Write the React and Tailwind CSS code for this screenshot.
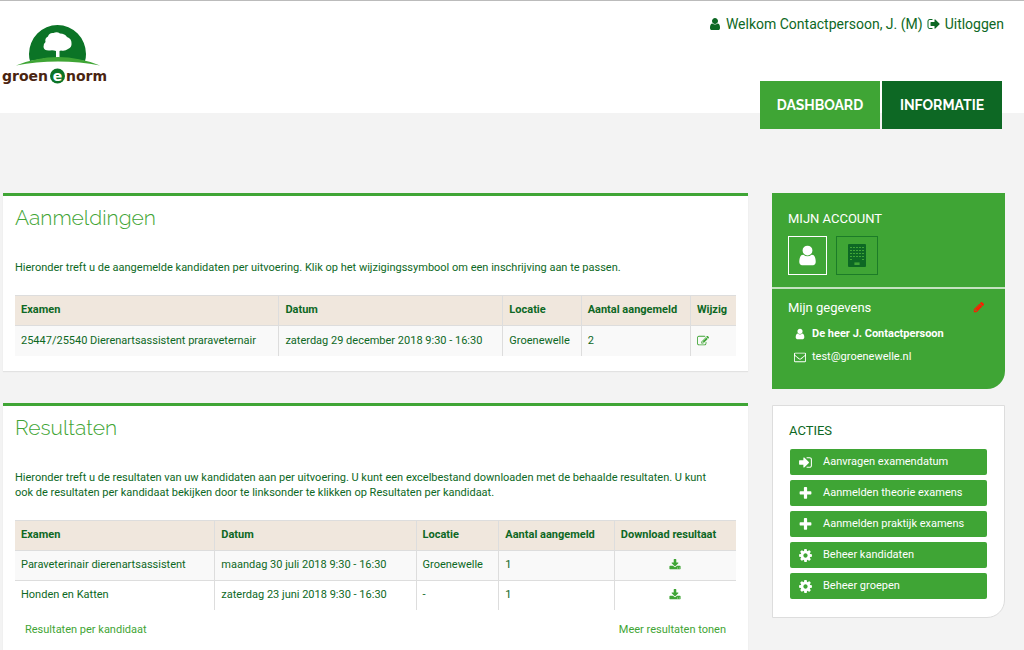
import React from 'react';

const PATHS = {
  user: 'M1536 1399q0 109-62.5 187t-150.5 78h-854q-88 0-150.5-78t-62.5-187q0-85 8.5-160.5t31.5-152 58.5-131 94-89 134.5-34.5q131 128 313 128t313-128q76 0 134.5 34.5t94 89 58.5 131 31.5 152 8.5 160.5zm-256-887q0 159-112.5 271.5t-271.5 112.5-271.5-112.5-112.5-271.5 112.5-271.5 271.5-112.5 271.5 112.5 112.5 271.5z',
  signOut: 'M704 1440q0 4 1 20t.5 26.5-3 23.5-10 19.5-20.5 6.5h-320q-119 0-203.5-84.5t-84.5-203.5v-704q0-119 84.5-203.5t203.5-84.5h320q13 0 22.5 9.5t9.5 22.5q0 4 1 20t.5 26.5-3 23.5-10 19.5-20.5 6.5h-320q-66 0-113 47t-47 113v704q0 66 47 113t113 47h312l11.5 1 11.5 3 8 5.5 7 9 2 13.5zm928-544q0 26-19 45l-544 544q-19 19-45 19t-45-19-19-45v-288h-448q-26 0-45-19t-19-45v-384q0-26 19-45t45-19h448v-288q0-26 19-45t45-19 45 19l544 544q19 19 19 45z',
  signIn: 'M1312 896q0 26-19 45l-544 544q-19 19-45 19t-45-19-19-45v-288h-448q-26 0-45-19t-19-45v-384q0-26 19-45t45-19h448v-288q0-26 19-45t45-19 45 19l544 544q19 19 19 45zm352-352v704q0 119-84.5 203.5t-203.5 84.5h-320q-13 0-22.5-9.5t-9.5-22.5q0-4-1-20t-.5-26.5 3-23.5 10-19.5 20.5-6.5h320q66 0 113-47t47-113v-704q0-66-47-113t-113-47h-312l-11.5-1-11.5-3-8-5.5-7-9-2-13.5q0-4-1-20t-.5-26.5 3-23.5 10-19.5 20.5-6.5h320q119 0 203.5 84.5t84.5 203.5z',
  plus: 'M1600 736v192q0 40-28 68t-68 28h-416v416q0 40-28 68t-68 28h-192q-40 0-68-28t-28-68v-416h-416q-40 0-68-28t-28-68v-192q0-40 28-68t68-28h416v-416q0-40 28-68t68-28h192q40 0 68 28t28 68v416h416q40 0 68 28t28 68z',
  cog: 'M1152 896q0-106-75-181t-181-75-181 75-75 181 75 181 181 75 181-75 75-181zm512-109v222q0 12-8 23t-20 13l-185 28q-19 54-39 91 35 50 107 138 10 12 10 25t-9 23q-27 37-99 108t-94 71q-12 0-26-9l-138-108q-44 23-91 38-16 136-29 186-7 28-36 28h-222q-14 0-24.5-8.5t-11.5-21.5l-28-184q-49-16-90-37l-141 107q-10 9-25 9-14 0-25-11-126-114-165-168-7-10-7-23 0-12 8-23 15-21 51-66.5t54-70.5q-27-50-41-99l-183-27q-13-2-21-12.5t-8-23.5v-222q0-12 8-23t19-13l186-28q14-46 39-92-40-57-107-138-10-12-10-24 0-10 9-23 26-36 98.5-107.5t94.5-71.5q13 0 26 10l138 107q44-23 91-38 16-136 29-186 7-28 36-28h222q14 0 24.5 8.5t11.5 21.5l28 184q49 16 90 37l142-107q9-9 24-9 13 0 25 10 129 119 165 170 7 8 7 22 0 12-8 23-15 21-51 66.5t-54 70.5q26 50 41 98l183 28q13 2 21 12.5t8 23.5z',
  pencil: 'M491 1536l91-91-235-235-91 91v107h128v128h107zm523-928q0-22-22-22-10 0-17 7l-542 542q-7 7-7 17 0 22 22 22 10 0 17-7l542-542q7-7 7-17zm-54-192l416 416-832 832h-416v-416zm683 96q0 53-37 90l-166 166-416-416 166-165q36-38 90-38 53 0 91 38l235 234q37 39 37 91z',
  envelope: 'M1664 1504v-768q-32 36-69 66-268 206-426 338-51 43-83 67t-86.5 48.5-102.5 24.5h-2q-48 0-102.5-24.5t-86.5-48.5-83-67q-158-132-426-338-37-30-69-66v768q0 13 9.5 22.5t22.5 9.5h1472q13 0 22.5-9.5t9.5-22.5zm0-1051v-24.5l-.5-13-3-12.5-5.5-9-9-7.5-14-2.5h-1472q-13 0-22.5 9.5t-9.5 22.5q0 168 147 284 193 152 401 317 6 5 35 29.5t46 37.5 44.5 31.5 50.5 27.5 43 9h2q20 0 43-9t50.5-27.5 44.5-31.5 46-37.5 35-29.5q208-165 401-317 54-43 100.5-115.5t46.5-131.5zm128-37v1088q0 66-47 113t-113 47h-1472q-66 0-113-47t-47-113v-1088q0-66 47-113t113-47h1472q66 0 113 47t47 113z',
  edit: 'M888 1184l116-116-152-152-116 116v56h96v96h56zm440-720q-16-16-33 1l-350 350q-17 17-1 33t33-1l350-350q17-17 1-33zm80 594v190q0 119-84.5 203.5t-203.5 84.5h-832q-119 0-203.5-84.5t-84.5-203.5v-832q0-119 84.5-203.5t203.5-84.5h832q63 0 117 25 15 7 18 23 3 17-9 29l-49 49q-14 14-32 8-23-6-45-6h-832q-66 0-113 47t-47 113v832q0 66 47 113t113 47h832q66 0 113-47t47-113v-126q0-13 9-22l64-64q15-15 35-7t20 29zm-96-738l288 288-672 672h-288v-288zm444 132l-92 92-288-288 92-92q28-28 68-28t68 28l152 152q28 28 28 68t-28 68z',
  download: 'M1344 1344q0-26-19-45t-45-19-45 19-19 45 19 45 45 19 45-19 19-45zm256 0q0-26-19-45t-45-19-45 19-19 45 19 45 45 19 45-19 19-45zm128-224v320q0 40-28 68t-68 28h-1472q-40 0-68-28t-28-68v-320q0-40 28-68t68-28h465l135 136q58 56 136 56t136-56l136-136h464q40 0 68 28t28 68zm-325-569q17 41-14 70l-448 448q-18 19-45 19t-45-19l-448-448q-31-29-14-70 17-39 59-39h256v-448q0-26 19-45t45-19h256q26 0 45 19t19 45v448h256q42 0 59 39z',
};

function Icon({ name, className }) {
  return (
    <svg viewBox="0 0 1792 1792" fill="currentColor" aria-hidden="true" className={className}>
      <path d={PATHS[name]} />
    </svg>
  );
}

function BuildingIcon({ className }) {
  const windows = [];
  for (let row = 0; row < 5; row += 1) {
    for (let col = 0; col < 5; col += 1) {
      if (row === 4 && col > 0 && col < 4) continue;
      windows.push(<rect key={`${row}-${col}`} x={2 + col * 3} y={3 + row * 3} width="2" height="1" />);
    }
  }
  return (
    <svg viewBox="0 0 18 23" aria-hidden="true" className={className}>
      <rect width="18" height="23" rx="1" fill="#0d6824" />
      <g fill="#3fa535">
        {windows}
        <rect x="6.4" y="18.4" width="5.2" height="2.6" />
      </g>
    </svg>
  );
}

function Logo() {
  return (
    <svg viewBox="0 0 110 64" role="img" aria-label="groen e norm" className="h-16 w-[110px]">
      <path d="M30 40Q29 37 29 33A28.500 29 0 0 1 86 33Q86 37 85 40Q57 34 30 40z" fill="#0b7426" />
      <path
        d="M56 38V30Q53 29 50 29.500Q44 30 43.500 26Q43 23 45.500 21Q44.500 17 48 15.500Q49 11.500 53.500 12Q57 10.500 60 12.500Q65 12.500 67 16Q71.500 17.500 71.500 22Q72 26.500 68 28Q65 30.500 61 29.500L59.500 30V38z"
        fill="#fff"
      />
      <path d="M16 44.500q21-8.500 42-8.500t42 8.500q-20-4-42-4t-42 4z" fill="#3fa535" />
      <circle cx="57.500" cy="55" r="7.500" fill="#0b7426" />
      <g fontFamily="'DejaVu Sans', sans-serif" fontWeight="700" fontSize="14">
        <text x="2" y="60" fill="#4a2410">groen</text>
        <text x="57.500" y="60" textAnchor="middle" fill="#fff">e</text>
        <text x="66" y="60" fill="#4a2410">norm</text>
      </g>
    </svg>
  );
}

function Panel({ title, children, className = '' }) {
  return (
    <section className={`border-t-3 border-[#3fa535] bg-white px-3 shadow-[0_1px_1px_#e2e2e2] ${className}`}>
      <h2 className="pt-2 font-['Raleway','Lato',sans-serif] text-[21px] leading-7 font-light text-[#3fa535]">{title}</h2>
      {children}
    </section>
  );
}

function DataTable({ headers, rows }) {
  return (
    <table className="w-full border-collapse text-left">
      <thead>
        <tr className="h-[30px] border-t border-[#ddd] bg-[#f0e7dd]">
          {headers.map((h) => (
            <th key={h} scope="col" className="border-l border-[#ddd] px-1.5 font-bold whitespace-nowrap first:border-l-0">{h}</th>
          ))}
        </tr>
      </thead>
      <tbody>
        {rows.map((cells, i) => (
          <tr key={i} className="h-[30px] border-t border-[#ddd] odd:bg-[#f9f9f9]">
            {cells.map((c, j) => (
              <td key={j} className="border-l border-[#ddd] px-1.5 whitespace-nowrap first:border-l-0">{c}</td>
            ))}
          </tr>
        ))}
      </tbody>
    </table>
  );
}

const download = (
  <a href="#download" aria-label="Download resultaat" className="flex justify-center text-[#3fa535]">
    <Icon name="download" className="size-3" />
  </a>
);

const ACTIONS = [
  ['signIn', 'Aanvragen examendatum'],
  ['plus', 'Aanmelden theorie examens'],
  ['plus', 'Aanmelden praktijk examens'],
  ['cog', 'Beheer kandidaten'],
  ['cog', 'Beheer groepen'],
];

export default function App() {
  return (
    <div className="flex min-h-screen flex-col bg-[#f3f3f3] font-['Roboto',sans-serif] text-[11px] text-[#0d6824]">
      <header className="flex h-[113px] justify-between border-t border-[#bbb] bg-white pr-5">
        <a href="#home" className="mt-5 self-start"><Logo /></a>
        <div className="flex flex-col items-end justify-between">
          <div className="mt-[13px] flex items-center gap-1 text-sm leading-5">
            <Icon name="user" className="size-3.5" />
            <span>Welkom Contactpersoon, J. (M)</span>
            <a href="#logout" className="flex items-center gap-1">
              <Icon name="signOut" className="size-3.5" />
              Uitloggen
            </a>
          </div>
          <nav className="mr-0.5 -mb-4 flex shrink-0 gap-0.5 font-['Raleway','Lato',sans-serif] text-sm font-bold text-white">
            <a href="#dashboard" className="flex h-12 w-[120px] items-center justify-center bg-[#3fa535]">DASHBOARD</a>
            <a href="#informatie" className="flex h-12 w-[120px] items-center justify-center bg-[#0d6824]">INFORMATIE</a>
          </nav>
        </div>
      </header>

      <div className="flex flex-1 gap-6 pt-20 pr-[19px] pl-[3px]">
        <main className="flex min-w-0 flex-1 flex-col gap-8">
          <Panel title="Aanmeldingen" className="pb-[15px]">
            <p className="mt-7 mb-5 leading-[15px]">
              Hieronder treft u de aangemelde kandidaten per uitvoering. Klik op het wijzigingssymbool om een inschrijving aan te passen.
            </p>
            <DataTable
              headers={['Examen', 'Datum', 'Locatie', 'Aantal aangemeld', 'Wijzig']}
              rows={[[
                '25447/25540 Dierenartsassistent praraveternair',
                'zaterdag 29 december 2018 9:30 - 16:30',
                'Groenewelle',
                '2',
                <a href="#wijzig" aria-label="Wijzig" className="flex text-[#3fa535]"><Icon name="edit" className="size-3" /></a>,
              ]]}
            />
          </Panel>
          <Panel title="Resultaten" className="flex-1">
            <p className="mt-7 mb-5 pr-3 leading-[15px]">
              Hieronder treft u de resultaten van uw kandidaten aan per uitvoering. U kunt een excelbestand downloaden met de behaalde resultaten. U kunt ook de resultaten per kandidaat bekijken door te linksonder te klikken op Resultaten per kandidaat.
            </p>
            <DataTable
              headers={['Examen', 'Datum', 'Locatie', 'Aantal aangemeld', 'Download resultaat']}
              rows={[
                ['Paraveterinair dierenartsassistent', 'maandag 30 juli 2018 9:30 - 16:30', 'Groenewelle', '1', download],
                ['Honden en Katten', 'zaterdag 23 juni 2018 9:30 - 16:30', '-', '1', download],
              ]}
            />
            <div className="flex justify-between px-2.5 py-3 leading-4 text-[#3fa535]">
              <a href="#kandidaat">Resultaten per kandidaat</a>
              <a href="#meer">Meer resultaten tonen</a>
            </div>
          </Panel>
        </main>

        <aside className="flex w-[233px] shrink-0 flex-col gap-4">
          <section className="rounded-br-[18px] bg-[#3fa535] text-white">
            <div className="border-b-2 border-[#c4e3c0] px-4 pt-4 pb-3">
              <h2 className="text-[13px] leading-5">MIJN ACCOUNT</h2>
              <div className="mt-[7px] flex gap-[9px]">
                <button type="button" aria-label="Persoon" className="flex h-[39px] w-[39px] items-center justify-center border border-white">
                  <Icon name="user" className="size-[23px]" />
                </button>
                <button type="button" aria-label="Organisatie" className="flex h-[39px] w-[42px] items-center justify-center border border-[#1c7c28]">
                  <BuildingIcon className="h-[23px] w-[18px]" />
                </button>
              </div>
            </div>
            <div className="px-4 pt-2 pb-6">
              <div className="flex justify-between">
                <h3 className="text-[13px] leading-[22px]">Mijn gegevens</h3>
                <a href="#bewerk" aria-label="Gegevens bewerken" className="mt-1 mr-1 text-[#ff1a00]"><Icon name="pencil" className="size-3" /></a>
              </div>
              <p className="mt-[7px] flex items-center gap-1.5 pl-1.5 leading-4 font-bold"><Icon name="user" className="size-3" />De heer J. Contactpersoon</p>
              <p className="mt-[7px] flex items-center gap-1.5 pl-1.5 leading-4"><Icon name="envelope" className="size-3" />test@groenewelle.nl</p>
            </div>
          </section>

          <section className="rounded-br-[18px] border border-[#ddd] bg-white p-4 pr-[17px] pb-[18px]">
            <h2 className="text-[13px] leading-[18px]">ACTIES</h2>
            <ul className="mt-[9px] flex flex-col gap-[5px] pl-px">
              {ACTIONS.map(([icon, label]) => (
                <li key={label}>
                  <button type="button" className="flex h-[26px] w-full items-center gap-2.5 rounded-xs bg-[#3fa535] pl-2 text-left text-white">
                    <Icon name={icon} className="size-[15px]" />
                    {label}
                  </button>
                </li>
              ))}
            </ul>
          </section>
        </aside>
      </div>
    </div>
  );
}
